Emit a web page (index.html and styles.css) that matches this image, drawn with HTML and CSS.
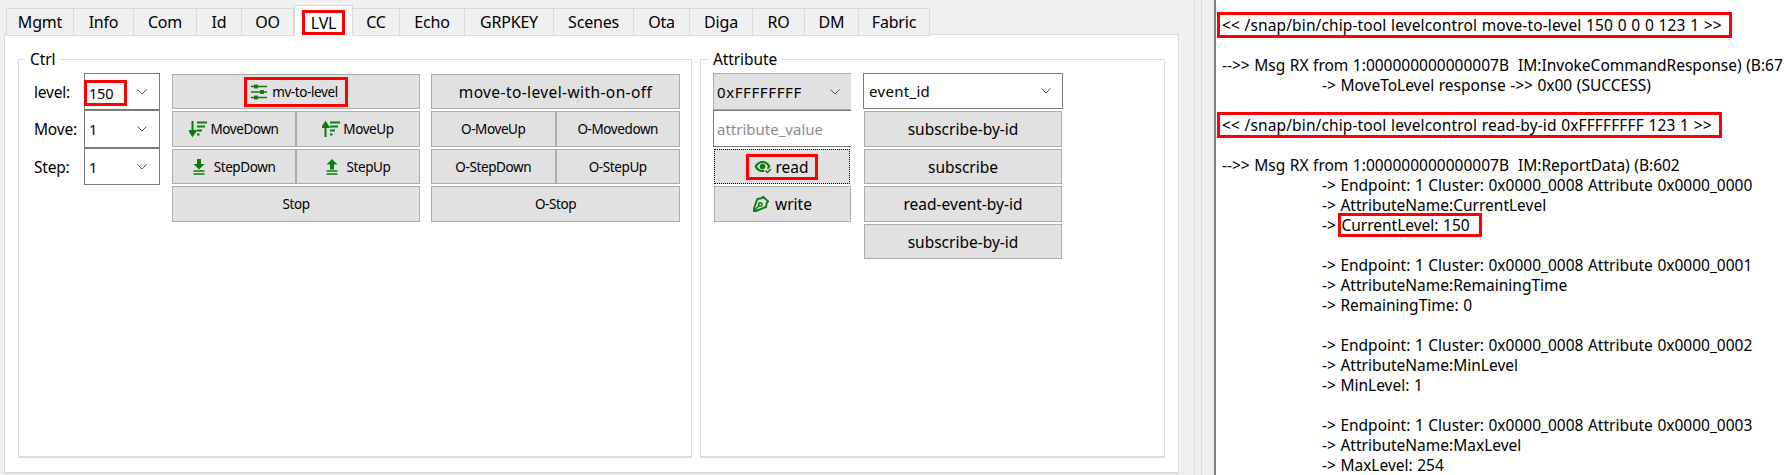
FILE: index.html
```html
<!DOCTYPE html>
<html lang="en">
<head>
<meta charset="utf-8">
<title>LVL</title>
<link rel="stylesheet" href="styles.css">
</head>
<body>
<svg class="defs" width="0" height="0" aria-hidden="true">
  <symbol id="i-sliders" viewBox="0 0 16 16">
    <path d="M0 2.5h16M0 8h16M0 13.500h16" stroke="currentColor" stroke-width="1.4" fill="none"/>
    <rect x="3" y="0.500" width="4" height="4" rx="0.800" fill="currentColor"/>
    <rect x="9" y="6" width="4" height="4" rx="0.800" fill="currentColor"/>
    <rect x="3" y="11.500" width="4" height="4" rx="0.800" fill="currentColor"/>
  </symbol>
  <symbol id="i-sort-down" viewBox="0 0 18 16">
    <path d="M3.500 0v13M0.500 10l3 4.500 3-4.500z" stroke="currentColor" stroke-width="2" fill="currentColor"/>
    <path d="M8 1.500h10M8 5.500h8M8 9.500h5M8 13.500h2.500" stroke="currentColor" stroke-width="2" fill="none"/>
  </symbol>
  <symbol id="i-sort-up" viewBox="0 0 18 16">
    <path d="M3.500 16V3M0.500 6l3-4.500 3 4.500z" stroke="currentColor" stroke-width="2" fill="currentColor"/>
    <path d="M8 1.500h10M8 5.500h8M8 9.500h5M8 13.500h2.500" stroke="currentColor" stroke-width="2" fill="none"/>
  </symbol>
  <symbol id="i-down" viewBox="0 0 12 16">
    <path d="M4 0h4v5h3.500L6 10.500 0.500 5H4z" fill="currentColor"/>
    <path d="M0.500 12h11M0.500 15h11" stroke="currentColor" stroke-width="1.600"/>
  </symbol>
  <symbol id="i-up" viewBox="0 0 12 16">
    <path d="M4 10.500h4v-5h3.500L6 0 0.500 5.500H4z" fill="currentColor"/>
    <path d="M0.500 12h11M0.500 15h11" stroke="currentColor" stroke-width="1.600"/>
  </symbol>
  <symbol id="i-eye" viewBox="0 0 18 14">
    <path d="M0.500 6.500C2.500 2.500 5.500 1 8.500 1s6 1.500 8 5.500c-.8 1.200-1.500 2-2.300 2.700l-1.600-1.300c.6-.5 1.100-1 1.500-1.400C12.600 4 10.600 3 8.500 3S4.400 4 3 6.500C4.400 9 6.400 10 8.500 10c.5 0 1 0 1.500-.2l.5 2c-.7.2-1.300.2-2 .2-3 0-6-1.500-8-5.500z" fill="currentColor"/>
    <circle cx="8.500" cy="6.500" r="2.800" fill="currentColor"/>
    <path d="M11.500 10.500l2 2 3.500-3.500" stroke="currentColor" stroke-width="1.500" fill="none"/>
  </symbol>
  <symbol id="i-pen" viewBox="0 0 16 16">
    <path d="M10 0.800l5.200 4.600-1.400 1.400-.8 4.200L3 15H0.700l.3-2.500L4.300 3l4.200-.8z" fill="none" stroke="currentColor" stroke-width="1.900" stroke-linejoin="round"/>
    <path d="M1.500 14.500l4.700-5" stroke="currentColor" stroke-width="1.500"/>
    <circle cx="7.300" cy="8.500" r="1.700" fill="none" stroke="currentColor" stroke-width="1.500"/>
  </symbol>
  <symbol id="i-chev" viewBox="0 0 10 6">
    <path d="M0.500 0.500L5 5l4.500-4.500" fill="none" stroke="currentColor" stroke-width="1"/>
  </symbol>
</svg>

<div class="app">
  <main class="tabwidget">
    <nav class="tabs">
      <span class="tab">Mgmt</span>
      <span class="tab">Info</span>
      <span class="tab">Com</span>
      <span class="tab">Id</span>
      <span class="tab">OO</span>
      <span class="tab tab-active"><span class="mark mark-tab">LVL</span></span>
      <span class="tab">CC</span>
      <span class="tab">Echo</span>
      <span class="tab">GRPKEY</span>
      <span class="tab">Scenes</span>
      <span class="tab">Ota</span>
      <span class="tab">Diga</span>
      <span class="tab">RO</span>
      <span class="tab">DM</span>
      <span class="tab">Fabric</span>
    </nav>
    <section class="pane">
      <fieldset class="group group-ctrl">
        <legend>Ctrl</legend>
        <div class="form">
          <label class="flabel">level:</label>
          <div class="combo combo-sm"><span class="mark mark-level">150</span><svg class="chev"><use href="#i-chev"/></svg></div>
          <label class="flabel">Move:</label>
          <div class="combo combo-sm"><span>1</span><svg class="chev"><use href="#i-chev"/></svg></div>
          <label class="flabel">Step:</label>
          <div class="combo combo-sm"><span>1</span><svg class="chev"><use href="#i-chev"/></svg></div>
        </div>
        <div class="btns btns-main">
          <button class="btn btn-sm wide"><span class="mark mark-mv"><svg class="ic ic-sl"><use href="#i-sliders"/></svg>mv-to-level</span></button>
          <button class="btn btn-sm"><svg class="ic ic-sort"><use href="#i-sort-down"/></svg>MoveDown</button>
          <button class="btn btn-sm"><svg class="ic ic-sort"><use href="#i-sort-up"/></svg>MoveUp</button>
          <button class="btn btn-sm"><svg class="ic ic-step"><use href="#i-down"/></svg>StepDown</button>
          <button class="btn btn-sm"><svg class="ic ic-step"><use href="#i-up"/></svg>StepUp</button>
          <button class="btn btn-sm wide">Stop</button>
        </div>
        <div class="btns">
          <button class="btn btn-long wide">move-to-level-with-on-off</button>
          <button class="btn btn-sm">O-MoveUp</button>
          <button class="btn btn-sm">O-Movedown</button>
          <button class="btn btn-sm">O-StepDown</button>
          <button class="btn btn-sm">O-StepUp</button>
          <button class="btn btn-sm wide">O-Stop</button>
        </div>
      </fieldset>
      <fieldset class="group group-attr">
        <legend>Attribute</legend>
        <div class="attr-col">
          <div class="combo combo-grey"><span>0xFFFFFFFF</span><svg class="chev"><use href="#i-chev"/></svg></div>
          <input class="field" placeholder="attribute_value">
          <button class="btn btn-in btn-focus"><span class="mark mark-read"><svg class="ic ic-eye"><use href="#i-eye"/></svg>read</span></button>
          <button class="btn btn-in btn-write"><svg class="ic ic-pen"><use href="#i-pen"/></svg>write</button>
        </div>
        <div class="event-col">
          <div class="combo combo-event"><span>event_id</span><svg class="chev"><use href="#i-chev"/></svg></div>
          <button class="btn btn-in">subscribe-by-id</button>
          <button class="btn btn-in">subscribe</button>
          <button class="btn btn-in">read-event-by-id</button>
          <button class="btn btn-in">subscribe-by-id</button>
        </div>
      </fieldset>
    </section>
  </main>
  <div class="gutter"></div>
  <aside class="log">
    <div class="line"><span class="mark mark-log">&lt;&lt; /snap/bin/chip-tool levelcontrol move-to-level 150 0 0 0 123 1 &gt;&gt;</span></div>
    <div class="line"></div>
    <div class="line">--&gt;&gt; Msg RX from 1:000000000000007B&nbsp; IM:InvokeCommandResponse) (B:67</div>
    <div class="line sub">-&gt; MoveToLevel response -&gt;&gt; 0x00 (SUCCESS)</div>
    <div class="line"></div>
    <div class="line"><span class="mark mark-log">&lt;&lt; /snap/bin/chip-tool levelcontrol read-by-id 0xFFFFFFFF 123 1 &gt;&gt;</span></div>
    <div class="line"></div>
    <div class="line">--&gt;&gt; Msg RX from 1:000000000000007B&nbsp; IM:ReportData) (B:602</div>
    <div class="line sub">-&gt; Endpoint: 1 Cluster: 0x0000_0008 Attribute 0x0000_0000</div>
    <div class="line sub">-&gt; AttributeName:CurrentLevel</div>
    <div class="line sub">-&gt; <span class="mark mark-cur">CurrentLevel: 150</span></div>
    <div class="line"></div>
    <div class="line sub">-&gt; Endpoint: 1 Cluster: 0x0000_0008 Attribute 0x0000_0001</div>
    <div class="line sub">-&gt; AttributeName:RemainingTime</div>
    <div class="line sub">-&gt; RemainingTime: 0</div>
    <div class="line"></div>
    <div class="line sub">-&gt; Endpoint: 1 Cluster: 0x0000_0008 Attribute 0x0000_0002</div>
    <div class="line sub">-&gt; AttributeName:MinLevel</div>
    <div class="line sub">-&gt; MinLevel: 1</div>
    <div class="line"></div>
    <div class="line sub">-&gt; Endpoint: 1 Cluster: 0x0000_0008 Attribute 0x0000_0003</div>
    <div class="line sub">-&gt; AttributeName:MaxLevel</div>
    <div class="line sub">-&gt; MaxLevel: 254</div>
  </aside>
</div>
</body>
</html>
```
FILE: styles.css
```css
* { box-sizing: border-box; }
html, body { margin: 0; height: 100%; overflow: hidden; }
body {
  background: #f0f0f0;
  color: #000;
  font-family: "Noto Sans", "Open Sans", sans-serif;
  font-size: 15px;
}
.defs { position: absolute; }

.app { display: flex; height: 475px; }

.tabwidget { width: 1179px; padding-left: 4px; display: flex; flex-direction: column; height: 474px; }
.tabs {
  display: grid;
  grid-template-columns: 70px 60px 63px 45px 52px 59px 47px 65px 89px 80px 56px 63px 52px 54px 71px;
  height: 35px;
  padding-top: 8px;
  justify-content: start;
  position: relative;
  z-index: 1;
  margin-bottom: -1px;
}
.tab {
  display: flex; align-items: center; justify-content: center;
  background: #f0f0f0;
  border: 1px solid #d9d9d9;
  border-left-width: 0;
  letter-spacing: -0.2px;
  font-size: 16px;
}
.tab:first-child { border-left-width: 1px; margin-left: 2px; }
.tab-active {
  background: #fff;
  border-left-width: 1px;
  margin-top: -3px;
  border-bottom-color: #fff;
}

.pane {
  flex: 1;
  background: #fff;
  border: 1px solid #d9d9d9;
  border-bottom-width: 2px;
  padding: 14px 13px;
  display: flex;
  gap: 8px;
  align-items: stretch;
}
.group {
  margin: 0;
  min-width: 0;
  border: 1px solid #dcdcdc;
  border-bottom-width: 2px;
  display: flex;
  align-items: flex-start;
}
.group legend {
  padding: 0 4px;
  margin-left: 7px;
  line-height: 20px;
  font-size: 15.500px;
  letter-spacing: -0.1px;
}
.group-ctrl { width: 674px; padding: 4px 0 0 0; gap: 11px; }
.group-attr { width: 465px; padding: 4px 0 0 12px; gap: 12px; }
.group-attr legend { margin-left: -4px; }

.form {
  display: grid;
  grid-template-columns: 50px 76px;
  grid-template-rows: 37px 38px 37px;
  width: 141px;
  padding-left: 15px;
  margin-right: 1px;
  align-items: center;
}
.flabel { font-size: 15.500px; letter-spacing: -0.2px; }

.combo {
  display: flex;
  align-items: center;
  justify-content: space-between;
  background: #fff;
  border: 1px solid #7a7a7a;
  padding: 0 12px 0 5px;
}
.combo-sm { height: 100%; font-size: 14.500px; padding-left: 4px; letter-spacing: -0.2px; }
.combo-grey {
  height: 37px;
  background: #e1e1e1;
  border: 0;
  border-top: 1px solid #adadad;
  border-bottom: 1px solid #adadad;
  border-left: 1px solid #adadad;
  padding: 0 11px 0 3px;
  letter-spacing: 0.6px;
}
.combo-event { height: 36px; width: 200px; padding: 0 11px 0 5px; letter-spacing: 0.3px; }
.chev { width: 10px; height: 6px; color: #555; flex: none; }

.btns {
  width: 249px;
  display: grid;
  grid-template-columns: 1fr 1fr;
  grid-template-rows: 35px 36px 35px 36px;
  row-gap: 2px;
  padding-top: 1px;
}
.btns-main { width: 248px; }
.wide { grid-column: 1 / -1; }

.btn {
  display: flex; align-items: center; justify-content: center;
  background: #e1e1e1;
  border: 1px solid #adadad;
  color: #000;
  font: inherit;
  font-size: 15.500px;
  padding: 0;
}
.btn-sm { font-size: 13.500px; letter-spacing: -0.4px; }
.btn-long { letter-spacing: 0.4px; }

.attr-col {
  width: 138px;
  display: grid;
  grid-template-rows: 37px 37px 37px 38px;
}
.attr-col .btn-in { margin: 2px 0 0 1px; width: 137px; }
.attr-col .btn-focus { width: 136px; outline: 1px dotted #000; outline-offset: -1px; border-color: #000; border-style: dotted; }
.field {
  border: 1px solid #7a7a7a;
  border-right: 0;
  height: 37px;
  margin: 0;
  padding: 0 3px;
  font: inherit;
  width: 100%;
  min-width: 0;
}
.field::placeholder { color: #8c8c8c; opacity: 1; }

.event-col {
  width: 200px;
  display: grid;
  grid-template-rows: 36px 36px 35px 36px 35px;
  row-gap: 2px;
}
.event-col .btn-in { width: 198px; margin-left: 1px; }

.ic { color: #0e7d0e; flex: none; }
.ic-sl { width: 16px; height: 16px; margin-right: 5px; }
.ic-sort { width: 18px; height: 16px; margin-right: 3px; }
.ic-step { width: 12px; height: 16px; margin-right: 9px; }
.ic-eye { width: 18px; height: 14px; margin-right: 3px; }
.ic-pen { width: 16px; height: 16px; margin-right: 6px; }

.mark { outline: 3px solid #f00; outline-offset: -3px; display: inline-flex; align-items: center; }
.mark-tab { padding: 3px 9px; height: 25px; margin-top: 4px; }
.mark-level { width: 43px; height: 26px; margin-left: -5px; margin-top: 3px; padding-left: 5px; }
.mark-mv { height: 30px; padding: 0 10px 0 7px; }
.mark-read { height: 26px; padding: 0 9px 0 8px; }

.gutter {
  width: 35px;
  background:
    linear-gradient(#dcdcdc, #dcdcdc) 15px 0 / 1px 100% no-repeat,
    linear-gradient(#dcdcdc, #dcdcdc) 22px 0 / 1px 100% no-repeat,
    #f0f0f0;
}

.log {
  flex: 1;
  min-width: 0;
  background: #fff;
  border-left: 2px solid #808080;
  padding: 15px 0 0 6px;
  overflow: hidden;
  white-space: nowrap;
  font-size: 15.500px;
  word-spacing: 0.5px;
  line-height: 20px;
}
.line { height: 20px; }
.sub { padding-left: 100px; }
.mark-log { outline-offset: 0; padding: 0 7px 0 2px; margin-left: -2px; letter-spacing: 0.12px; }
.mark-cur { outline-offset: -1px; padding: 0 10px 0 1px; }
```
